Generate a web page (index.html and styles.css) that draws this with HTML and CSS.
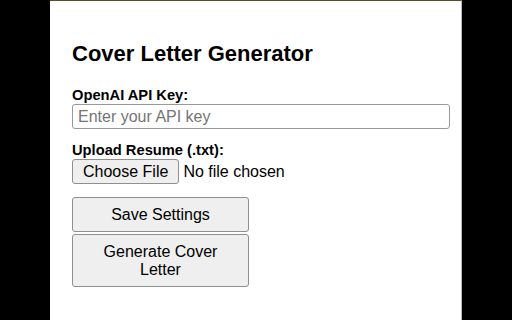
FILE: index.html
```html
<!DOCTYPE html>
<html lang="en">
<head>
<meta charset="utf-8">
<title>Cover Letter Generator</title>
<link rel="stylesheet" href="styles.css">
</head>
<body>
<div class="stage">
  <main class="popup">
    <h1 class="title">Cover Letter Generator</h1>
    <label class="field-label" for="apiKey">OpenAI API Key:</label>
    <input class="text-input" id="apiKey" type="text" placeholder="Enter your API key">
    <label class="field-label upload-label">Upload Resume (.txt):</label>
    <div class="file-row">
      <button class="file-btn" type="button">Choose File</button>
      <span class="file-name">No file chosen</span>
    </div>
    <div class="actions">
      <button class="btn" type="button">Save Settings</button>
      <button class="btn" type="button">Generate Cover Letter</button>
    </div>
  </main>
</div>
</body>
</html>
```
FILE: styles.css
```css
html, body {
  margin: 0;
  padding: 0;
  background: #000;
}

.stage {
  display: flex;
  justify-content: center;
  height: 320px;
  overflow: hidden;
}

.popup {
  width: 412px;
  height: 320px;
  box-sizing: border-box;
  background: #fff;
  border-top: 1px solid #5a4a2c;
  border-right: 1px solid #b8b8b8;
  padding: 0 0 0 22px;
  font-family: "Liberation Sans", Arial, sans-serif;
  color: #000;
  display: flex;
  flex-direction: column;
  align-items: flex-start;
}

.title {
  font-size: 22px;
  font-weight: bold;
  line-height: 25px;
  margin: 40px 0 0;
}

.field-label {
  display: block;
  font-size: 14.7px;
  font-weight: bold;
  line-height: 17px;
  margin-top: 21px;
}

.upload-label {
  margin-top: 13px;
}

.text-input {
  width: 378px;
  height: 25px;
  box-sizing: border-box;
  border: 1px solid #999;
  border-radius: 3px;
  padding: 0 5px;
  margin: 0;
  font-family: "Liberation Sans", Arial, sans-serif;
  font-size: 16px;
  color: #000;
  background: #fff;
}

.text-input::placeholder {
  color: #757575;
}

.file-row {
  display: flex;
  align-items: center;
  gap: 4px;
}

.file-btn,
.btn {
  font-family: "Liberation Sans", Arial, sans-serif;
  font-size: 16px;
  color: #000;
  background: #efefef;
  border: 1px solid #8f8f8f;
  border-radius: 3px;
  margin: 0;
}

.file-btn {
  height: 25px;
  padding: 0 10px;
  line-height: 18px;
}

.file-name {
  font-size: 16px;
  line-height: 18px;
}

.actions {
  margin-top: 13px;
  display: flex;
  flex-direction: column;
  gap: 2px;
}

.btn {
  width: 177px;
  padding: 7.5px 10px;
  line-height: 18px;
  text-align: center;
}
```
